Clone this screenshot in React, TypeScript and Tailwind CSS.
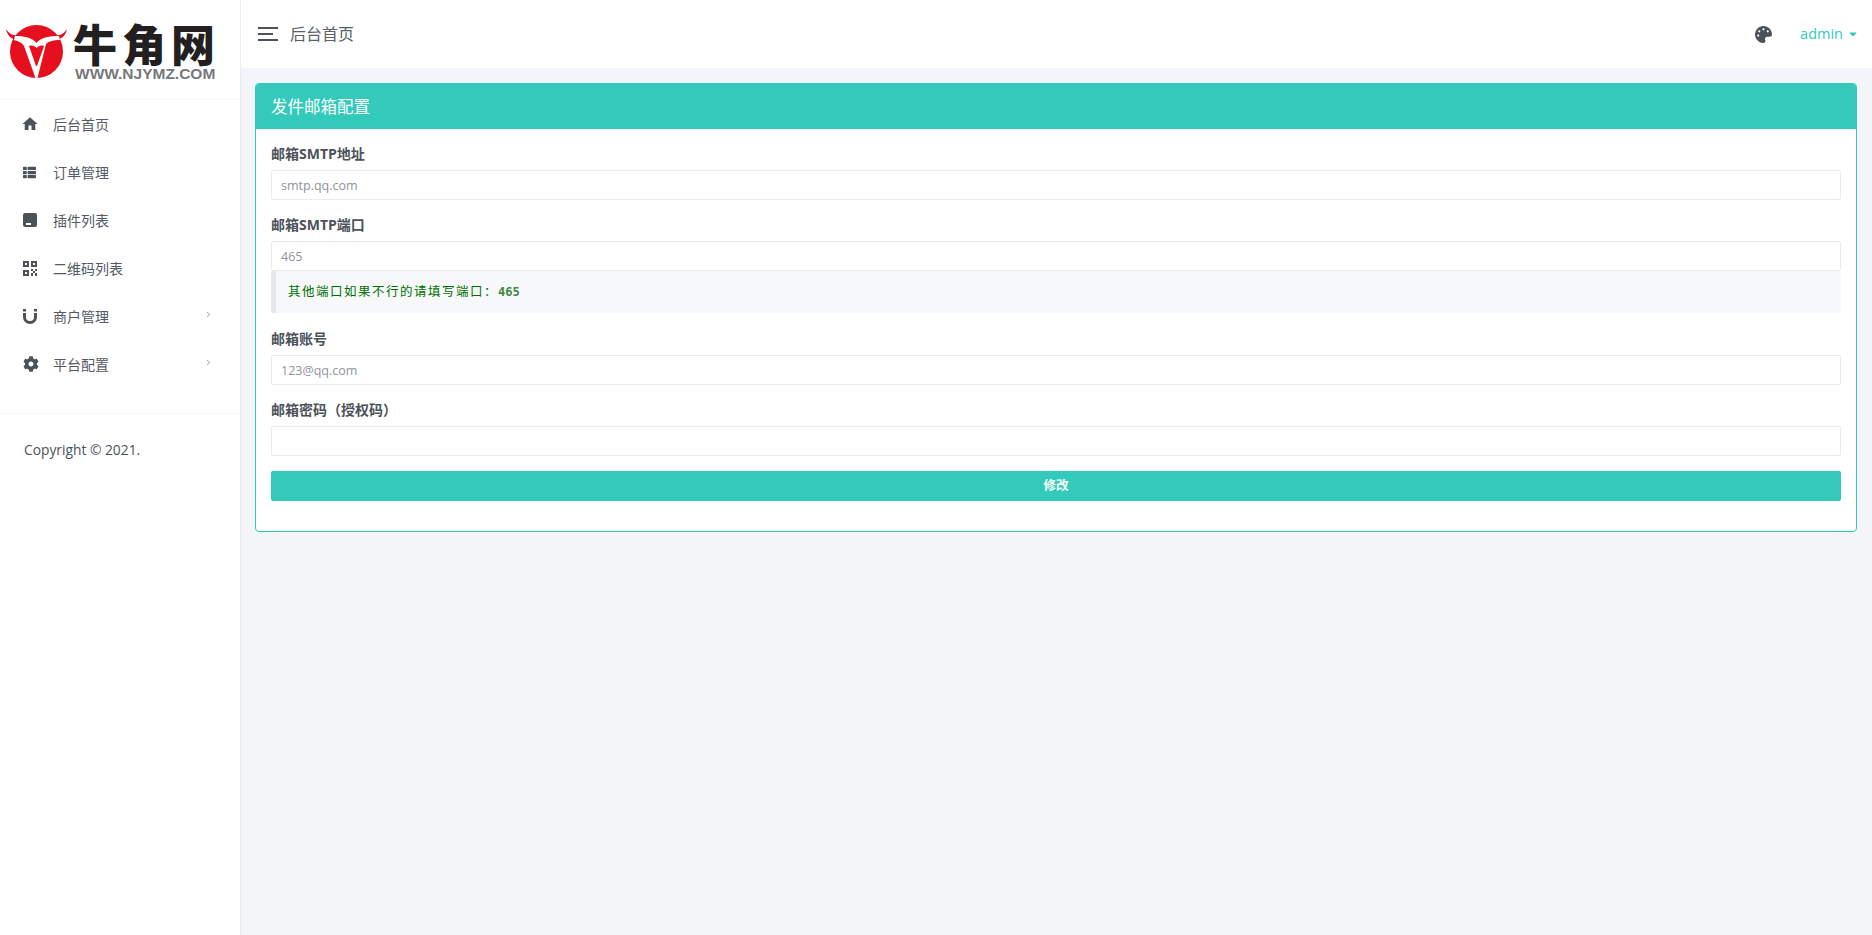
import { ChevronRight } from "lucide-react";
import type { ReactNode } from "react";
import { FaCaretDown, FaCog, FaPalette, FaThList } from "react-icons/fa";
import { MdHome } from "react-icons/md";

const bodyFont = "font-['Open_Sans','Noto_Sans_CJK_SC',sans-serif]";

function Logo() {
  return (
    <div className="flex h-[100px] items-start border-b border-[#f8f8f8]">
      <svg width="73" height="99" viewBox="0 0 73 99" className="shrink-0">
        <circle cx="36.5" cy="51.5" r="26.5" fill="#e60f1e" />
        <path d="M6 29c1 6 5 10 11 11l3-4c-6 0-11-2-14-7zM67 29c-1 6-5 10-11 11l-3-4c6 0 11-2 14-7z" fill="#e60f1e" />
        <path d="M15 36c8 0 17 1 21.500 7 4.500-6 13.500-7 22.500-7l1 4c-6 0-11 1-14 4L37.500 78h-2L24 46c-2-3-5-5-10-6z" fill="#fff" />
        <path d="M29 46c3-1 6 0 7.500 2 2-2 5-3 7.500-2l-7 20h-1z" fill="#e60f1e" />
      </svg>
      <div className="flex w-[148px] flex-col pt-[20px]">
        <span className="h-[47px] font-['Noto_Sans_CJK_SC',sans-serif] text-[44px] leading-[46px] font-black tracking-[5px] whitespace-nowrap text-[#231f20]">
          牛角网
        </span>
        <span className="ml-[2px] font-['Liberation_Sans',sans-serif] text-[15.500px] leading-[14px] font-bold whitespace-nowrap text-[#77787b]">
          WWW.NJYMZ.COM
        </span>
      </div>
    </div>
  );
}

function PluginIcon() {
  return (
    <svg width="14" height="14" viewBox="0 0 14 14">
      <path d="M2 0h10a2 2 0 0 1 2 2v3H0V2a2 2 0 0 1 2-2zM0 5h14v7a2 2 0 0 1-2 2H2a2 2 0 0 1-2-2zm3 5v2h5v-2z" fill="currentColor" fillRule="evenodd" />
    </svg>
  );
}

function QrIcon() {
  return (
    <svg width="14" height="15" viewBox="0 0 14 15" fill="currentColor">
      <path fillRule="evenodd" d="M0 0h6v6H0zm2 2v2h2V2zM8 0h6v6H8zm2 2v2h2V2zM0 9h6v6H0zm2 2v2h2v-2z" />
      <path d="M8 8h2v2H8zM12 8h2v2h-2zM10 10h2v2h-2zM8 12h2v3H8zM12 12h2v3h-2z" />
    </svg>
  );
}

function MagnetIcon() {
  return (
    <svg width="14" height="15" viewBox="0 0 14 15" fill="none">
      <path d="M1.500 4V8a5.500 5.500 0 0 0 11 0V4" stroke="currentColor" strokeWidth="3" />
      <path d="M0 0h3v2.400H0zM11 0h3v2.400h-3z" fill="currentColor" />
    </svg>
  );
}

const menu: { title: string; icon: ReactNode; more?: boolean }[] = [
  { title: "后台首页", icon: <MdHome size={18} className="-mx-[2px]" /> },
  { title: "订单管理", icon: <FaThList size={13} /> },
  { title: "插件列表", icon: <PluginIcon /> },
  { title: "二维码列表", icon: <QrIcon /> },
  { title: "商户管理", icon: <MagnetIcon />, more: true },
  { title: "平台配置", icon: <FaCog size={16} />, more: true },
];

function Sidebar() {
  return (
    <aside className="w-[241px] shrink-0 border-r border-[#ebedf4] bg-white">
      <Logo />
      <ul className="border-b border-[#f5f5f5] pb-[25px]">
        {menu.map(({ title, icon, more }) => (
          <li key={title} className="flex h-12 items-center text-[#555a64]">
            <span className="flex w-[53px] shrink-0 pl-[23px] text-[#4d5259]">{icon}</span>
            <span className="w-[151px] text-[14px]">{title}</span>
            {more && <ChevronRight size={9} strokeWidth={2} className="-mt-[4px] text-[#777]" />}
          </li>
        ))}
      </ul>
      <p className="pt-[26px] pl-6 text-[13.800px] leading-5 text-[#4d5259]">Copyright © 2021.</p>
    </aside>
  );
}

function Header() {
  return (
    <header className="flex h-[68px] shrink-0 items-center bg-white pr-[13px] pl-[17px]">
      <div className="flex w-5 flex-col gap-[4px]">
        <span className="h-[2px] w-5 bg-[#4d5259]" />
        <span className="h-[2px] w-[15px] bg-[#4d5259]" />
        <span className="h-[2px] w-5 bg-[#4d5259]" />
      </div>
      <span className="ml-[12px] text-[16px] text-[#5a5f68]">后台首页</span>
      <FaPalette size={17} className="mr-[28px] ml-auto text-[#4d5259]" />
      <span className="text-[14.500px] text-[#33cabb]">admin</span>
      <FaCaretDown size={12} className="ml-[4px] text-[#33cabb]" />
    </header>
  );
}

function Field({ label, placeholder, children }: { label: string; placeholder?: string; children?: ReactNode }) {
  return (
    <div className="mb-[15px]">
      <label className="mb-[6px] block h-5 text-[14px] leading-5 font-bold text-[#4d5259]">{label}</label>
      <input
        readOnly
        placeholder={placeholder}
        className="block h-[30px] w-full rounded-[2px] border border-[#ebebeb] bg-white px-[9px] text-[12.500px] outline-none placeholder:text-[#8f949b]"
      />
      {children}
    </div>
  );
}

export default function App() {
  return (
    <div className={`flex min-h-[935px] bg-[#f4f5f9] ${bodyFont}`}>
      <Sidebar />
      <main className="flex min-w-0 flex-1 flex-col">
        <Header />
        <div className="pt-[15px] pr-[15px] pl-[14px]">
          <section className="overflow-hidden rounded-[4px] border border-[#33cabb] bg-white">
            <h4 className="flex h-[45px] items-center bg-[#33cabb] px-[15px] pt-[2px] text-[16.500px] font-normal text-white">
              发件邮箱配置
            </h4>
            <form className="px-[15px] pt-[15px] pb-[30px]">
              <Field label="邮箱SMTP地址" placeholder="smtp.qq.com" />
              <Field label="邮箱SMTP端口" placeholder="465">
                <div className="mb-[16px] flex h-[42px] items-center rounded-[2px] border-l-[5px] border-[#e7e8ea] bg-[#f7f8f9] pl-3 text-[12.500px] text-[#007000]">
                  <span className="tracking-[1.500px]">其他端口如果不行的请填写端口：</span>
                  <span className="font-['DejaVu_Sans_Mono',monospace] text-[12px] font-bold text-[#3f873f]">465</span>
                </div>
              </Field>
              <Field label="邮箱账号" placeholder="123@qq.com" />
              <Field label="邮箱密码（授权码）" />
              <button
                type="button"
                className="block h-[30px] w-full rounded-[2px] bg-[#33cabb] text-[12.500px] font-bold text-white"
              >
                修改
              </button>
            </form>
          </section>
        </div>
      </main>
    </div>
  );
}
